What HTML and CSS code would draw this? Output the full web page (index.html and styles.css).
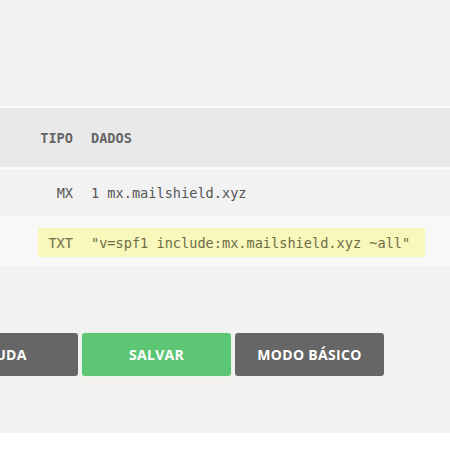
FILE: index.html
```html
<!DOCTYPE html>
<html lang="pt">
<head>
<meta charset="utf-8">
<link rel="stylesheet" href="styles.css">
</head>
<body>
<div class="page">
  <div class="table">
    <div class="row head">
      <div class="cells">
        <div class="tipo">TIPO</div>
        <div class="dados">DADOS</div>
      </div>
    </div>
    <div class="row odd">
      <div class="cells">
        <div class="tipo">MX</div>
        <div class="dados">1 mx.mailshield.xyz</div>
      </div>
    </div>
    <div class="row even">
      <div class="cells hl">
        <div class="tipo">TXT</div>
        <div class="dados">"v=spf1 include:mx.mailshield.xyz ~all"</div>
      </div>
    </div>
  </div>
  <div class="actions">
    <button class="btn dark">AJUDA</button>
    <button class="btn green">SALVAR</button>
    <button class="btn dark">MODO BÁSICO</button>
  </div>
</div>
</body>
</html>
```

FILE: styles.css
```css
html, body {
  margin: 0;
  padding: 0;
  background: #ffffff;
}
.page {
  height: 433px;
  background: #f2f2f1;
  padding-top: 106px;
  box-sizing: border-box;
  overflow: hidden;
}
.table {
  border-top: 2px solid #fafafa;
  font-family: "DejaVu Sans Mono", "Liberation Mono", monospace;
  font-size: 13.6px;
  color: #555555;
}
.row {
  display: flex;
  align-items: center;
  border-bottom: 2px solid #fafafa;
}
.row.head {
  height: 59px;
  background: #e9e9e9;
  font-weight: bold;
  color: #666666;
}
.row.odd {
  height: 47px;
  background: #f2f2f2;
}
.row.even {
  height: 46px;
  background: #f8f8f8;
}
.cells {
  display: flex;
  align-items: center;
  height: 29px;
  margin-left: 38px;
  padding-right: 15px;
}
.cells.hl {
  background: #f8f8bc;
  color: #6d6d45;
  margin-top: 3px;
}
.tipo {
  width: 35px;
  text-align: right;
}
.dados {
  margin-left: 18px;
  white-space: pre;
}
.actions {
  display: flex;
  gap: 4px;
  margin-top: 67px;
  margin-left: -71px;
}
.btn {
  height: 43px;
  border: none;
  border-radius: 3px;
  color: #ffffff;
  font-family: "Open Sans", "Liberation Sans", sans-serif;
  font-weight: bold;
  font-size: 14px;
  letter-spacing: 0.3px;
  padding: 0;
}
.btn.dark {
  width: 149px;
  background: #666666;
}
.btn.green {
  width: 149px;
  background: #5cc675;
  box-shadow: 0 0 0 1px #e3f5e6;
}
```
